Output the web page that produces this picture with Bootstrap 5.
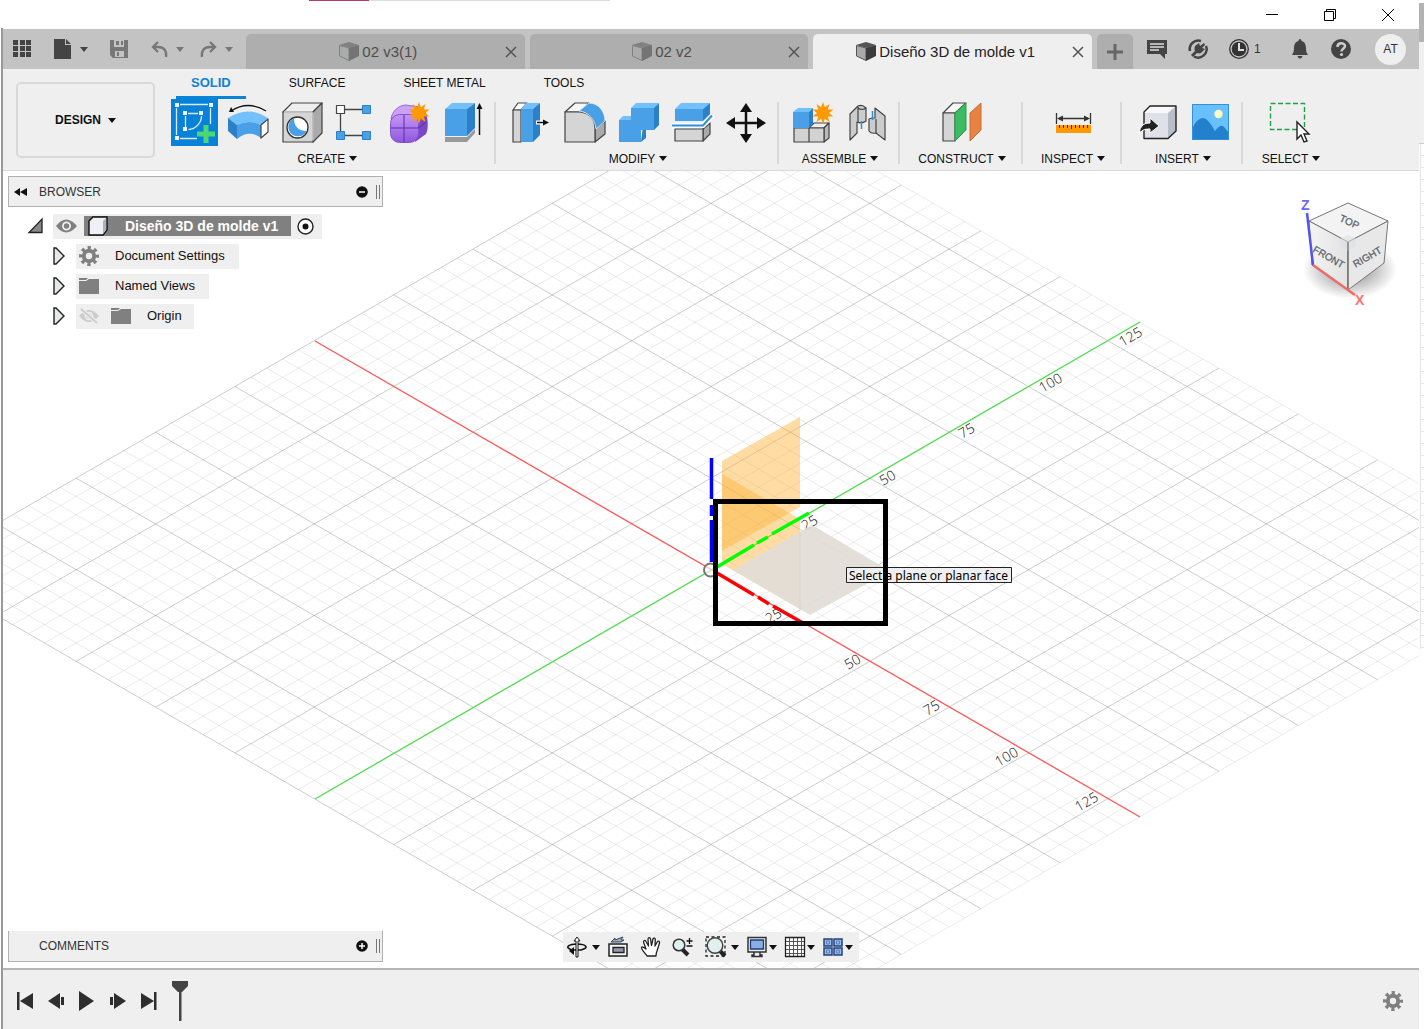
<!DOCTYPE html>
<html lang="en">
<head>
<meta charset="utf-8">
<meta name="viewport" content="width=device-width, initial-scale=1">
<title>Diseño 3D de molde v1</title>
<link href="https://cdn.jsdelivr.net/npm/bootstrap@5.3.0/dist/css/bootstrap.min.css" rel="stylesheet">
<style>
body{font-family:"Liberation Sans",Arial,sans-serif;font-size:12px;line-height:16px;color:#111;background:#fff}
svg{display:block;overflow:visible;flex:none}
.plain{border:0;background:none;padding:0;color:inherit;display:flex;align-items:center}
.app-frame{min-width:0}
.app-main{margin-left:1px;border-left:2px solid;border-image:linear-gradient(#fff 29px,#999 29px) 1}
.edge-strip{width:5px}
.edge-top{height:39px;margin-top:3px;background:#b3b3b3}
.edge-mid{height:102px;background:#f0f0f0;border-bottom:1px solid #ccc}
.edge-rule{height:505px;border-left:1px solid #e4e4e4;margin-left:1px;background:repeating-linear-gradient(#fff 0 11px,#e6e6e6 11px 12px)}
.titlebar{height:29px;padding-right:2px}
.load-line{width:301px;height:1px;left:309px;background:linear-gradient(90deg,#b83b72 60px,#ddd 60px)}
.titlebar .plain{width:58px;justify-content:center}
.tabbar{height:40px;background:#c3c3c3}
.quick{width:243px;padding-left:10px;color:#444}
.quick .plain{margin-right:21px;gap:6px}
.quick .dim{color:#777}
.quick .tight{margin-right:15px}
.doc-tab{margin-top:5px;border-radius:5px 5px 0 0;background:#aeaeae;color:#4d4d4d;font-size:15px;line-height:20px;padding-left:14px}
.doc-tab.on{background:#efefef;color:#222}
.doc-tab .closer{width:28px;justify-content:center;color:#555}
.doc-title{gap:3px}
.tabs-gap{gap:5px}
.plus{width:36px;margin-top:5px;background:#aeaeae;border-radius:5px 5px 0 0;justify-content:center;color:#666}
.tools-end{width:286px;padding-left:13px;gap:19px;color:#444}
.clock-btn{width:42px;gap:4px;color:#333}
.avatar{width:31px;height:31px;border-radius:50%;background:#efefef;justify-content:center;margin-left:4px;color:#333}
.ribbon{background:#efefef;border-bottom:1px solid #d9d9d9;height:102px}
.design-zone{width:155px;padding:13px 3px 12px 13px}
.design-btn{border:2px solid #d9d9d9;border-radius:5px;font-weight:bold;gap:7px;justify-content:center;width:100%;height:100%}
.tri{width:0;height:0;border:4px solid transparent;border-top:5px solid currentColor;border-bottom:0;flex:none}
.ribbon-tabs{height:30px;gap:28px;padding-left:18px}
.ribbon-tabs a{color:#111;text-decoration:none;padding:6px 15px 5px;border-bottom:3px solid transparent}
.ribbon-tabs a.on{color:#0a84d6;font-weight:bold;font-size:13px;border-color:#0a84d6}
.tool-group{padding:0 6px 0 7px;background:linear-gradient(#d8d8d8,#d8d8d8) right 3px/2px 62px no-repeat}
.tool-group:last-child{background:none}
.tool-group .plain{padding:0 3px}
.tool-group .group-name{height:23px;gap:4px;justify-content:center;width:100%}
.w-create{width:338px}.w-modify{width:283px}.w-pair{width:121px}.w-construct{width:123px}.w-inspect{width:99px}.w-select{width:95px}
.stage{overflow:hidden;background:#fff}
.stage-over{padding:5px 5px 6px}
.panel-bar{width:375px;height:31px;background:#efefef;border:1px solid #b0b0b0;color:#333;padding:0 2px 0 5px}
.panel-bar.low{border-top:0;padding-left:30px}
.panel-bar h2{font-size:12px;line-height:16px;margin:0;font-weight:normal}
.grip{width:4px;height:14px;border:solid #777;border-width:0 1px}
.tree{margin-top:4px;font-size:13px;padding:0;list-style:none}
.tree li{height:30px;display:flex;align-items:center}
.tree .pill{background:#efefef;height:25px;display:flex;align-items:center;padding:0 14px 0 3px}
.root-row{padding-left:20px;gap:9px}
.sub-row{padding-left:45px;gap:11px}
.root-name{background:#808080;color:#fff;font-size:14px;font-weight:bold;height:20px;display:flex;align-items:center;padding:0 13px 0 4px;gap:17px;margin:0 6px 0 7px}
.navbox{background:#efefef;height:30px;padding:0 3px;color:#111}
.bottom-row{display:grid;grid-template-columns:1fr auto 1fr;align-items:end}
.n41{width:41px;gap:4px}.n38{width:38px;gap:1px}.n34{width:34px;gap:1px}.n33{width:33px}.n31{width:31px}
.timeline{height:61px;border-top:2px solid #b5b5b5;background:#efefef;padding:2px 16px 0 6px;color:#2e2e2e}
.timeline .plain{width:31px;justify-content:center}
.outl{stroke:#444;stroke-width:1.2;stroke-linejoin:round}
.axis-num{font-family:"Open Sans",sans-serif;font-weight:300;font-size:14px;fill:#111}
.hint{font-family:"Noto Sans","Open Sans",sans-serif;font-size:12px;fill:#000}
.cube-txt{font-family:"Liberation Sans",sans-serif;font-size:10px;fill:#5c636c;stroke:#5c636c;stroke-width:.3}
</style>
<script src="https://cdn.jsdelivr.net/npm/bootstrap@5.3.0/dist/js/bootstrap.bundle.min.js"></script>
</head>
<body>
<svg width="0" height="0" class="position-absolute" aria-hidden="true">
<defs>
<linearGradient id="gViolet" y2="1" x2="0"><stop stop-color="#c596f7"/><stop offset="1" stop-color="#8d58dd"/></linearGradient>
<linearGradient id="gLeft"><stop stop-color="#f4f4f4"/><stop offset="1" stop-color="#e2e2e2"/></linearGradient>
<symbol id="spark" viewBox="-10 -10 20 20"><path fill="#f90" d="M0-10 1.7-5.2 5.9-8.1 4.4-3.2 9.5-3.1 5.5 0 9.5 3.1 4.4 3.2 5.9 8.1 1.7 5.2 0 10-1.7 5.2-5.9 8.1-4.4 3.2-9.5 3.1-5.5 0-9.5-3.1-4.4-3.2-5.9-8.1-1.7-5.2z"/></symbol>
<symbol id="box" viewBox="0 0 20 19"><path fill="#555" d="M0 3 10 0l10 3-9 3z"/><path fill="#a8abac" stroke="#555" d="M.5 3.500 10 6v12.500L.5 14z"/><path fill="#3c3c3c" d="M10 6l10-3v11l-10 5z"/></symbol>
<symbol id="gear" viewBox="0 0 20 20"><g fill="none" stroke="#808080"><circle cx="10" cy="10" r="5.200" stroke-width="4"/><circle cx="10" cy="10" r="8" stroke-width="4" stroke-dasharray="3.14" stroke-dashoffset="1.57"/></g></symbol>
<symbol id="folder" viewBox="0 0 20 16"><path fill="#808080" d="M0 0h9l-2 2H0zM0 3h7l3-2h10v15H0z"/></symbol>
<symbol id="expander" viewBox="0 0 12 18"><path fill="#e6e8ea" stroke="#222" stroke-width="1.400" d="M1 1h2l8 8-8 8H1z"/></symbol>
<symbol id="x" viewBox="0 0 12 12"><path fill="none" stroke="currentColor" stroke-width="1.500" d="M1 1l10 10M11 1 1 11"/></symbol>
</defs>
</svg>
<div class="d-flex min-vh-100 app-frame">
<div class="app-main flex-grow-1 d-flex flex-column">
<header>
<div class="titlebar d-flex justify-content-end">
<div class="load-line position-absolute top-0"></div>
<button class="plain" aria-label="Minimize"><svg width="12" height="12"><path stroke="#000" d="M0 5.500h12"/></svg></button>
<button class="plain" aria-label="Restore"><svg width="12" height="12"><path fill="none" stroke="#000" d="M.5 2.500h9v9h-9zM2.500 2V.5h9v9H10"/></svg></button>
<button class="plain" aria-label="Close"><svg width="12" height="12"><path stroke="#000" d="M0 0l12 12M12 0 0 12"/></svg></button>
</div>
<div class="tabbar d-flex">
<div class="quick d-flex align-items-center">
<button class="plain" aria-label="Data panel"><svg width="20" height="20" fill="currentColor"><path d="M0 1h5v5H0zM7 1h5v5H7zM13 1h5v5h-5zM0 7h5v5H0zM7 7h5v5H7zM13 7h5v5h-5zM0 13h5v5H0zM7 13h5v5H7zM13 13h5v5h-5z"/></svg></button>
<button class="plain" aria-label="File"><svg width="20" height="20" fill="currentColor"><path d="M0 0h11v6h6v14H0zM12 0l5 5h-5z"/></svg><span class="tri"></span></button>
<button class="plain dim" aria-label="Save"><svg width="20" height="20"><path fill="currentColor" fill-rule="evenodd" d="M1 1h18v18H4l-3-3zM5 1v7h10V1zM6 12v6h9v-6z"/><path fill="currentColor" d="M7 2h3v4H7zM12 2h2v4h-2zM8 13h2v4H8z"/></svg></button>
<button class="plain dim tight" aria-label="Undo"><svg width="20" height="20"><path fill="none" stroke="currentColor" stroke-width="2.300" d="M8 3 3 8l5 5M3 8h5c6 0 9 4 8 10"/></svg><span class="tri"></span></button>
<button class="plain dim me-0" aria-label="Redo"><svg width="20" height="20"><path fill="none" stroke="currentColor" stroke-width="2.300" d="M11 3l5 5-5 5M16 8h-5c-6 0-9 4-8 10"/></svg><span class="tri"></span></button>
</div>
<nav class="d-flex flex-grow-1 tabs-gap" aria-label="Documents">
<div class="doc-tab d-flex flex-grow-1 w-100"><div class="doc-title d-flex flex-grow-1 justify-content-center align-items-center"><svg width="20" height="19" opacity=".5"><use href="#box"/></svg><span>02 v3(1)</span></div><button class="plain closer" aria-label="Close tab"><svg width="12" height="12"><use href="#x"/></svg></button></div>
<div class="doc-tab d-flex flex-grow-1 w-100"><div class="doc-title d-flex flex-grow-1 justify-content-center align-items-center"><svg width="20" height="19" opacity=".5"><use href="#box"/></svg><span>02 v2</span></div><button class="plain closer" aria-label="Close tab"><svg width="12" height="12"><use href="#x"/></svg></button></div>
<div class="doc-tab on d-flex flex-grow-1 w-100"><div class="doc-title d-flex flex-grow-1 justify-content-center align-items-center text-nowrap"><svg width="20" height="19"><use href="#box"/></svg><span>Diseño 3D de molde v1</span></div><button class="plain closer" aria-label="Close tab"><svg width="12" height="12"><use href="#x"/></svg></button></div>
<button class="plain plus flex-shrink-0" aria-label="New tab"><svg width="16" height="16"><path stroke="currentColor" stroke-width="3" d="M8 0v16M0 8h16"/></svg></button>
</nav>
<div class="tools-end d-flex align-items-center flex-shrink-0">
<button class="plain" aria-label="Comments"><svg width="22" height="20"><path fill="currentColor" d="M1 1h20v14h-2v5l-5-5H1z"/><path stroke="#ddd" stroke-width="1.500" d="M4 5h14M4 8h14M4 11h9"/></svg></button>
<button class="plain" aria-label="Extensions"><svg width="22" height="22"><path fill="none" stroke="currentColor" stroke-width="2.500" d="M14 3A8.500 8.500 0 0 0 3 13M7 18.500A8.500 8.500 0 0 0 19 8"/><path fill="currentColor" d="M8 8l4-3 1 3 4-3 1 2-3 3 3 1-4 4c-2 1-4 0-4 0l-4 4-2-2 4-4c-1-2 0-5 0-5z"/></svg></button>
<button class="plain clock-btn"><svg width="22" height="22"><circle cx="11" cy="11" r="9.300" fill="none" stroke="currentColor" stroke-width="1.300"/><circle cx="11" cy="11" r="7.300" fill="currentColor"/><path fill="none" stroke="#ddd" stroke-width="2" d="M11 5v7h5"/></svg>1</button>
<button class="plain" aria-label="Notifications"><svg width="22" height="22"><path fill="currentColor" d="M11 1c1 0 1.500 1 1.500 2C16 4 17 7 17 10c0 4 1 5 2 7H3c1-2 2-3 2-7 0-3 1-6 4.500-7C9.500 2 10 1 11 1zM8.500 18h5c-.5 2-1.500 2.500-2.500 2.500S9 20 8.500 18z"/></svg></button>
<button class="plain" aria-label="Help"><svg width="22" height="22"><circle cx="11" cy="11" r="10" fill="currentColor"/><path fill="none" stroke="#ccc" stroke-width="2.500" d="M7.500 9c0-5 7.500-4.500 7.500-1 0 2.500-3.500 2.500-3.500 5.500"/><circle cx="11.500" cy="16.500" r="1.600" fill="#ccc"/></svg></button>
<button class="plain avatar">AT</button>
</div>
</div>
<div class="ribbon d-flex">
<div class="design-zone flex-shrink-0"><button class="plain design-btn">DESIGN<span class="tri"></span></button></div>
<div>
<nav class="ribbon-tabs d-flex" aria-label="Workspace"><a href="#" class="on">SOLID</a><a href="#">SURFACE</a><a href="#">SHEET METAL</a><a href="#">TOOLS</a></nav>
<div class="d-flex">
<div class="tool-group w-create"><div class="d-flex justify-content-center">
<button class="plain" aria-label="Create sketch"><svg width="48" height="48"><path fill="#0782d8" d="M2 0h47v47H2z"/><path fill="none" stroke="#d8ebf8" stroke-width="1.300" d="M11 5.500h28M7.500 9v27M41.500 9v16M11 39.500h17M19 14.500h10M16.500 17v11M32.500 17c0 7-6 13-13 13.500"/><path fill="#f4f4f4" d="M6 4h4v4H6zM40 4h4v4h-4zM6 37h4v4H6zM14 12h4v4h-4zM30 12h4v4h-4zM14 28h4v4h-4z"/><path stroke="#4cd774" stroke-width="5" d="M37 26v18M28 35h18"/></svg></button>
<button class="plain" aria-label="Revolve"><svg width="48" height="48"><path fill="#72c0fc" d="M5 19q20-13 40 0l-7 7q-12-6-24 0z"/><path fill="#4aa0e6" d="M14 26q12-6 24 0v13q-12-9-24 1z"/><path fill="#2c80c8" d="M5 19l9 7v14l-9-8z"/><path fill="#fff" class="outl" stroke="#222" d="M38 26l7-6v13l-7 6z"/><path fill="none" stroke="#111" stroke-width="1.300" d="M8 12q17-11 35 0"/><path fill="#111" d="M6 13l2-5 3 5z"/></svg></button>
<button class="plain" aria-label="Hole"><svg width="48" height="48"><path fill="#eee" class="outl" d="M6 13 15 4h30l-9 9z"/><path fill="#aaa" class="outl" d="M36 13l9-9v30l-9 9z"/><path fill="#d5d5d5" class="outl" d="M6 13h30v30H6z"/><path stroke="#d5d5d5" stroke-width="1.500" d="M7 13h28.500M36 13.500v28"/><circle cx="20.500" cy="28.500" r="10.500" fill="#fff" stroke="#333" stroke-width="1.300"/><path fill="#4aa0e6" d="M17 19.500c0 8 4 12 12.500 12.500a9.500 9.500 0 0 1-17.500-1c-2-5 1-10 5-11.500z"/></svg></button>
<button class="plain" aria-label="Pattern"><svg width="48" height="48"><path stroke="#444" stroke-width="1.300" d="M14 10.500h17M9.500 15v17M14 36.500h17"/><path fill="#fff" class="outl" d="M5.500 6.500h8v8h-8z"/><path fill="#4aa0e6" stroke="#2c80c8" d="M31.500 6.500h8v8h-8zM5.500 32.500h8v8h-8zM31.500 32.500h8v8h-8z"/></svg></button>
<button class="plain" aria-label="Create form"><svg width="48" height="48"><path fill="#7a48c4" d="M28 14l11-4c4 6 5 19 2 25l-11 8z"/><path fill="#caa2f8" stroke="#9a68dc" d="M6 20c1-8 8-14 15-14l14 2-5 9z"/><rect x="5.500" y="15.500" width="28" height="28" rx="9" fill="url(#gViolet)" stroke="#8450d0"/><path fill="none" stroke="#5b2fa5" d="M19 16v27M6 29h27l8-6"/><use href="#spark" x="23" y="3" width="22" height="22"/></svg></button>
<button class="plain" aria-label="Extrude"><svg width="48" height="48"><path fill="#999" d="M6 38h22l8-8v4l-8 9H6z"/><path fill="#72c0fc" d="M6 10l7-6h23l-8 6z"/><path fill="#4aa0e6" d="M6 10h22v27H6z"/><path fill="#2c80c8" d="M28 10l8-6v25l-8 8z"/><path stroke="#111" stroke-width="1.500" d="M40.500 8v28"/><path fill="#111" d="M40.500 4l3 6h-6z"/></svg></button>
</div><button class="plain group-name">CREATE<span class="tri"></span></button></div>
<div class="tool-group w-modify"><div class="d-flex justify-content-center">
<button class="plain" aria-label="Press pull"><svg width="48" height="48"><path fill="#fff" class="outl" d="M7 11l5-7h9l-6 7z"/><path fill="#d5d5d5" class="outl" d="M7 11h8v32H7z"/><path fill="#72c0fc" d="M15 10l5-6h14l-7 6z"/><path fill="#4aa0e6" d="M15 10h12v33H15z"/><path fill="#2c80c8" d="M27 10l7-6v32l-7 7z"/><path stroke="#fff" stroke-width="4" d="M30 23.500h8"/><path stroke="#111" stroke-width="1.500" d="M31 23.500h8"/><path fill="#111" d="M43 23.500l-6-3v6z"/></svg></button>
<button class="plain" aria-label="Fillet"><svg width="48" height="48"><path fill="#f7f7f7" class="outl" d="M5 13l10-9h14l-9 9z"/><path fill="#aaa" class="outl" d="M35 30l10-8v13l-10 8z"/><path fill="#d5d5d5" class="outl" d="M5 13h15q15 2 15 17v13H5z"/><path fill="#4aa0e6" stroke="#efefef" stroke-width=".8" d="M29 4c10 0 16 9 16 18l-9 8C35 20 28 13 19 12z"/></svg></button>
<button class="plain" aria-label="Combine"><svg width="48" height="48"><path fill="#2c80c8" d="M27 43l5-4v-8h8l5-5V4l-6 5-10 18z"/><path fill="#72c0fc" d="M17 9l5-5h23l-5 5zM5 21l4-4h8v4z"/><path fill="#4aa0e6" d="M17 9h23v22H27v12H5V21h12z"/></svg></button>
<button class="plain" aria-label="Split body"><svg width="48" height="48"><path fill="#72c0fc" d="M7 10l6-6h29l-7 6z"/><path fill="#4aa0e6" d="M7 10h28v12H7z"/><path fill="#2c80c8" d="M35 10l7-6v11l-7 7z"/><path fill="#aaa" class="outl" d="M35 30l7-6v11l-7 7z"/><path fill="#d5d5d5" class="outl" d="M7 30h28v12H7z"/><path fill="none" stroke="#fff" stroke-width="5" d="M4 26.500h31l10-10"/><path fill="none" stroke="#2c8fe0" stroke-width="2" d="M4 26.500h31l9-10"/></svg></button>
<button class="plain" aria-label="Move"><svg width="48" height="48"><path stroke="#111" stroke-width="2.500" d="M24 9v30M9 24h30"/><path fill="#111" d="M24 4l6 9H18zM24 44l6-9H18zM4 24l9-6v12zM44 24l-9-6v12z"/></svg></button>
</div><button class="plain group-name">MODIFY<span class="tri"></span></button></div>
<div class="tool-group w-pair"><div class="d-flex justify-content-center">
<button class="plain" aria-label="New component"><svg width="48" height="48"><path fill="#eee" class="outl" d="M20 29l5-5h15l-5 5z"/><path fill="#bbb" class="outl" d="M35 29l5-5v15l-5 4z"/><path fill="#d2d2d2" class="outl" d="M5 29h15v14H5zM20 29h15v14H20z"/><path fill="#72c0fc" d="M4 13l5-4h15l-4 4z"/><path fill="#2c80c8" d="M20 13l4-4v16l-4 4z"/><path fill="#4aa0e6" d="M4 13h16v16H4z"/><use href="#spark" x="23" y="3" width="22" height="22"/></svg></button>
<button class="plain" aria-label="Joint"><svg width="48" height="48"><path fill="#ccc" class="outl" d="M7 15l8-8q4-2 8 2v13q-4 3-9 1v11l-7 7zM32 9l10 8v24l-9-7q-5 1-7-2V20l3-1h3z"/><path fill="none" class="outl" d="M15 8v15M33 20v14M15 9q4 3 8 0"/><path stroke="#2c8fe0" stroke-width="1.500" d="M18.500 22v8M29.500 12v9"/></svg></button>
</div><button class="plain group-name">ASSEMBLE<span class="tri"></span></button></div>
<div class="tool-group w-construct"><div class="d-flex justify-content-center">
<button class="plain" aria-label="Offset plane"><svg width="48" height="48"><path fill="#f7f7f7" class="outl" d="M5 14l10-10h13L17 14z"/><path fill="#d5d5d5" class="outl" d="M5 14h12v28H5z"/><path fill="#3cbc62" stroke="#2a9d4c" d="M17 14 28 4v27L17 42z"/><path fill="#e68343" stroke="#cd6d2f" d="M32 14 43 4v27L32 42z"/></svg></button>
</div><button class="plain group-name">CONSTRUCT<span class="tri"></span></button></div>
<div class="tool-group w-inspect"><div class="d-flex justify-content-center">
<button class="plain" aria-label="Measure"><svg width="48" height="48"><path stroke="#333" stroke-width="1.300" d="M7.500 14v11M41.500 14v11M10 19.500h29"/><path fill="#333" d="M8 19.500l6-3v6zM41 19.500l-6-3v6z"/><path fill="#f90" d="M7 26h35v8H7z"/><path stroke="#333" d="M10.500 26v3M14.500 26v3M18.500 26v3M22.500 26v4M26.500 26v3M30.500 26v3M34.500 26v3M38.500 26v3"/></svg></button>
</div><button class="plain group-name">INSPECT<span class="tri"></span></button></div>
<div class="tool-group w-pair"><div class="d-flex justify-content-center">
<button class="plain" aria-label="Insert derive"><svg width="48" height="48"><path fill="#f8f8fa" d="M12 13l6-6h26l-8 7H12z"/><path fill="#b9bdc8" d="M36 14l8-7v25l-8 7z"/><path fill="#dfe1e8" d="M12 14h24v25H12z"/><path fill="none" stroke="#222" stroke-width="1.400" stroke-linejoin="round" d="M12 13l6-6h26v25l-8 7.500H12z"/><path fill="#222" stroke="#fff" d="M7 34q2-11 11-10v-5l9 8-9 7v-4q-6-1-11 4z"/></svg></button>
<button class="plain" aria-label="Insert image"><svg width="48" height="48"><path fill="#69c0ff" d="M6 5h37v36H6z"/><path fill="#2380cc" d="M6 30q5-11 11-11 5 0 12 13 6-8 9-4l5 6v7H6z"/><path fill="none" stroke="#3590d8" d="M6.500 5.500h36v35h-36z"/><circle cx="32.500" cy="15" r="4.200" fill="#fdfcc0"/></svg></button>
</div><button class="plain group-name">INSERT<span class="tri"></span></button></div>
<div class="tool-group w-select"><div class="d-flex justify-content-center">
<button class="plain" aria-label="Select"><svg width="48" height="48"><path fill="none" stroke="#1fa045" stroke-width="1.400" stroke-dasharray="5 2.500" d="M3.500 4.500h34v26h-34z"/><path fill="#fff" stroke="#222" stroke-width="1.400" d="M30 23v17l4-4 3 7 3-1-3-7h5z"/></svg></button>
</div><button class="plain group-name">SELECT<span class="tri"></span></button></div>
</div>
</div>
</div>
</header>
<main class="stage flex-grow-1 position-relative d-flex">
<svg class="position-absolute w-100 h-100" viewBox="3 171 1416 797" preserveAspectRatio="xMidYMid slice" role="img" aria-label="Modeling canvas">
<path id="minor" fill="none" stroke="#000" stroke-opacity=".08"/>
<path id="major" fill="none" stroke="#000" stroke-opacity=".2"/>
<g stroke-width="1.300"><path stroke="#f55" d="M315 341l825 476"/><path stroke="#4fdc4f" d="M315 799l825-477"/></g>
<g class="axis-num" text-anchor="middle">
<text transform="translate(812 527) rotate(-30)">25</text><text transform="translate(890 482) rotate(-30)">50</text><text transform="translate(969 435) rotate(-30)">75</text><text transform="translate(1053 387) rotate(-30)">100</text><text transform="translate(1133 341) rotate(-30)">125</text>
<text transform="translate(776 620) rotate(-30)">25</text><text transform="translate(855 666) rotate(-30)">50</text><text transform="translate(934 712) rotate(-30)">75</text><text transform="translate(1009 761) rotate(-30)">100</text><text transform="translate(1089 806) rotate(-30)">125</text>
</g>
<g fill="#fdb136" fill-opacity=".45"><path d="M722 461l78-44v90l-78 44z"/><path d="M722 474l78 45v90l-78-45z"/></g>
<path fill="#e2ddd6" fill-opacity=".93" d="M733 570l79-45 78 46-80 44z"/>
<path stroke="#d8d2c9" d="M800 532v77"/>
<circle cx="710.500" cy="570" r="6.500" fill="#fff" fill-opacity=".6" stroke="#777" stroke-width="2"/>
<g fill="none" stroke-width="3.500"><path stroke="#00f" d="M711.500 458v41M711.500 505v11M711.500 520v42"/><path stroke="#0f0" d="M717 567l37-22M757 543l11-6M772 534l37-21"/><path stroke="red" d="M717 573l37 22M758 597l11 7M773 606l30 17"/></g>
<path fill="#efefef" stroke="#222" d="M846.500 567.500h165v15h-165z"/>
<text class="hint" x="849" y="580">Select a plane or planar face</text>
<path fill="none" stroke="#000" stroke-width="5" d="M715.500 501.500h170v122h-170z"/>
</svg>
<svg class="position-absolute top-0 end-0" width="139" height="149" viewBox="1280 171 139 149" role="img" aria-label="View cube">
<defs><radialGradient id="shade"><stop offset=".4" stop-color="#000" stop-opacity=".3"/><stop offset="1" stop-color="#000" stop-opacity="0"/></radialGradient></defs>
<ellipse cx="1350" cy="269" rx="47" ry="30" fill="url(#shade)"/>
<g stroke="#777" stroke-width="1"><path fill="#f3f3f3" d="M1348 203l40 18-40 21-39-21z"/><path fill="url(#gLeft)" d="M1309 221l39 21v48l-36-25z"/><path fill="#e8e8e8" d="M1348 242l40-21-4 42-36 27z"/></g>
<path fill="#dde0e5" d="M1348 235l8 4v7l-8 5-8-5v-7z" opacity=".6"/>
<path stroke="#666" d="M1348 242v48"/>
<g class="cube-txt" text-anchor="middle"><text transform="translate(1348 225) rotate(24)">TOP</text><text transform="translate(1327 260) rotate(30)">FRONT</text><text transform="translate(1369 260) rotate(-30)">RIGHT</text></g>
<path stroke="#5553ee" stroke-width="2.500" d="M1307 213l6 52"/><path stroke="#f06a6a" stroke-width="2.500" d="M1313 265l42 30"/>
<text x="1301" y="210" font-size="14" font-weight="bold" fill="#6a68f0">Z</text><text x="1355" y="305" font-size="14" font-weight="bold" fill="#ff7070">X</text>
</svg>
<div class="stage-over position-relative d-flex flex-column justify-content-between flex-grow-1">
<section aria-label="Browser">
<div class="panel-bar d-flex align-items-center"><button class="plain" aria-label="Collapse"><svg width="13" height="8"><path fill="#111" d="M0 4l6-4v8zM6 4l7-4v8z"/></svg></button><h2 class="ms-2 ps-1 flex-grow-1">BROWSER</h2><button class="plain me-2" aria-label="Hide"><svg width="12" height="12"><circle cx="6" cy="6" r="5.800" fill="#111"/><path stroke="#fff" stroke-width="1.500" d="M3 6h6"/></svg></button><span class="grip"></span></div>
<ul class="tree mb-0">
<li class="root-row"><svg width="16" height="16"><path fill="#888" stroke="#222" stroke-width="1.300" d="M1 14.500h13V1z"/></svg><span class="pill pe-2"><svg width="21" height="14"><path fill="#808080" d="M0 7q10-13 21 0-11 13-21 0z"/><circle cx="10.500" cy="7" r="3.600" fill="#808080" stroke="#efefef" stroke-width="1.800"/></svg><span class="root-name"><svg width="20" height="20"><path fill="#eef0f5" stroke="#111" stroke-width="1.400" d="M1 5l4-4h14v13l-4 5H1z"/><path fill="#aab0bc" d="M15 5l3-3v12l-3 4z"/></svg>Diseño 3D de molde v1</span><svg width="17" height="17"><circle cx="8.500" cy="8.500" r="7.500" fill="#fff" stroke="#222" stroke-width="1.400"/><circle cx="8.500" cy="8.500" r="3" fill="#111"/></svg></span></li>
<li class="sub-row"><svg width="12" height="18"><use href="#expander"/></svg><span class="pill"><svg width="20" height="20" class="me-3"><use href="#gear"/></svg><span>Document Settings</span></span></li>
<li class="sub-row"><svg width="12" height="18"><use href="#expander"/></svg><span class="pill"><svg width="20" height="16" class="me-3"><use href="#folder"/></svg><span>Named Views</span></span></li>
<li class="sub-row"><svg width="12" height="18"><use href="#expander"/></svg><span class="pill pe-2"><svg width="20" height="16" class="me-2"><path fill="#ccc" d="M0 8q10-12 20 0-10 12-20 0z"/><circle cx="10" cy="8" r="3.500" fill="#ccc" stroke="#efefef" stroke-width="1.600"/><path stroke="#efefef" stroke-width="4" d="M2 1l16 14"/><path stroke="#ccc" stroke-width="1.800" d="M2 1l16 14"/></svg><svg width="20" height="16" class="ms-1 me-3"><use href="#folder"/></svg><span class="pe-1">Origin</span></span></li>
</ul>
</section>
<div class="bottom-row">
<div class="panel-bar low d-flex align-items-center"><h2 class="flex-grow-1">COMMENTS</h2><button class="plain me-2" aria-label="Show comments"><svg width="12" height="12"><circle cx="6" cy="6" r="5.800" fill="#111"/><path stroke="#fff" stroke-width="1.500" d="M3 6h6M6 3v6"/></svg></button><span class="grip"></span></div>
<div class="navbox d-flex">
<button class="plain n41" aria-label="Orbit"><svg width="22" height="22"><path fill="none" stroke="#111" stroke-width="1.600" d="M6 14c-9-3-2-6 5-6 9 0 13 4 4 6H5"/><path fill="#111" d="M3 15l5-4v8z"/><path fill="#fff" stroke="#111" d="M10 21V5H8l3-4 3 4h-2v16z"/></svg><span class="tri"></span></button>
<button class="plain n33" aria-label="Look at"><svg width="22" height="22"><path fill="#f5f5f5" stroke="#222" stroke-width="1.500" d="M2 8h18v12H2z"/><path fill="#99a" stroke="#222" stroke-width="1.300" d="M6 11.500h11v5H6z"/><path fill="#9fb0c0" stroke="#345" d="M4 6l4-4v2l8-3-2 3h3l-3 2z"/></svg></button>
<button class="plain n31" aria-label="Pan"><svg width="22" height="22"><path fill="#fff" stroke="#222" stroke-width="1.300" stroke-linejoin="round" d="M7 20C5 17 1 13 1.500 11.500S5 12 6 13L3.500 6c0-2 2-2 2.500-.5L8.500 10 8 3c.5-2 2-1.500 2.500 0l1 6.500L13 3c.5-1.500 2.500-1 2.300.5L15 10l2.500-4.500c1-1 2.500 0 2 1.500L17 15c-1 2-1 3-1 5z"/></svg></button>
<button class="plain n34" aria-label="Zoom"><svg width="22" height="22"><path stroke="#222" stroke-width="4" d="M11 13l6 6"/><circle cx="8" cy="9" r="5.800" fill="#dff0f0" stroke="#333" stroke-width="1.500"/><path stroke="#111" stroke-width="1.300" d="M18.500 2v6M15.500 5h6M15.500 10h6"/></svg></button>
<button class="plain n41" aria-label="Fit"><svg width="22" height="22"><path fill="none" stroke="#222" stroke-width="1.300" stroke-dasharray="3 2.500" d="M1 1h19v19H1z"/><path stroke="#222" stroke-width="4" d="M15 15l5 5"/><circle cx="10" cy="9.500" r="7.800" fill="#dff0ee" stroke="#444" stroke-width="1.500"/></svg><span class="tri"></span></button>
<button class="plain n38" aria-label="Display"><svg width="22" height="22"><path fill="#eee" stroke="#333" stroke-width="1.500" d="M2 1.500h18v14.500H2zM8 16h6v3h2v1.500H6V19h2z"/><path fill="#86b0e4" stroke="#1d3c78" stroke-width="1.300" d="M4.500 4h13v9h-13z"/></svg><span class="tri"></span></button>
<button class="plain n38" aria-label="Grid"><svg width="22" height="22"><path fill="#fff" stroke="#555" d="M1.500 1.500h19v19h-19zM5.500 1v19M9.500 1v19M13.500 1v19M17.500 1v19M1 5.500h19M1 9.500h19M1 13.500h19M1 17.500h19"/><path fill="none" stroke="#222" stroke-width="1.300" d="M1.500 1.500h19v19h-19z"/></svg><span class="tri"></span></button>
<button class="plain n34" aria-label="Viewports"><svg width="22" height="22"><path fill="#9bbde8" stroke="#23437c" stroke-width="1.500" d="M2 3h8v7H2zM12 3h8v7h-8zM2 12h8v7H2zM12 12h8v7h-8z"/><path fill="none" stroke="#5b80b8" d="M4.500 5h3v3h-3zM14.500 5h3v3h-3zM4.500 14h3v3h-3zM14.500 14h3v3h-3z"/></svg><span class="tri"></span></button>
</div>
<div></div>
</div>
</div>
</main>
<footer class="timeline d-flex align-items-center">
<button class="plain" aria-label="To start"><svg width="16" height="18" fill="currentColor"><path d="M0 0h2.500v18H0zM3 9l13-8v16z"/></svg></button>
<button class="plain" aria-label="Step back"><svg width="16" height="18" fill="currentColor"><path d="M0 9l12-8v16zM13 5h3v8h-3z"/></svg></button>
<button class="plain" aria-label="Play"><svg width="15" height="20" fill="currentColor"><path d="M0 0l15 10L0 20z"/></svg></button>
<button class="plain" aria-label="Step forward"><svg width="16" height="18" fill="currentColor"><path d="M16 9 4 1v16zM0 5h3v8H0z"/></svg></button>
<button class="plain" aria-label="To end"><svg width="16" height="18" fill="currentColor"><path d="M13 0h2.500v18H13zM13 9 0 1v16z"/></svg></button>
<button class="plain" aria-label="Timeline marker"><svg width="16" height="40" fill="#444"><path d="M0 0h16v5l-6 6H6L0 5zM7 10h2.500v30H7z"/></svg></button>
<button class="plain ms-auto w-auto" aria-label="Settings"><svg width="20" height="20"><use href="#gear"/></svg></button>
</footer>
</div>
<aside class="edge-strip flex-shrink-0" aria-hidden="true"><div class="edge-top"></div><div class="edge-mid"></div><div class="edge-rule"></div></aside>
</div>
<script>
// Isometric ground grid: both axes run from -25 to 27 cells, every fifth line is a major one.
const px=(u,v)=>(711+15.87*(u+v)).toFixed(1)+' '+(569.7+9.16*(u-v)).toFixed(1);
const out={minor:'',major:''};
for(let i=-25;i<=27;i++){
  if(i===0)continue;
  const k=i%5===0?'major':'minor';
  out[k]+=`M${px(i,-25)}L${px(i,27)}M${px(-25,i)}L${px(27,i)}`;
}
for(const k in out)document.getElementById(k).setAttribute('d',out[k]);
</script>
</body>
</html>
